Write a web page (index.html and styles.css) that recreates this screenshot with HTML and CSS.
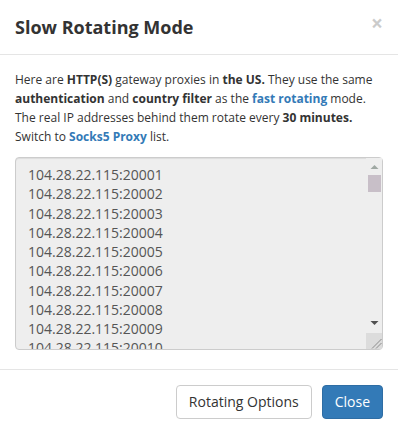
FILE: index.html
```html
<!DOCTYPE html>
<html>
<head>
<meta charset="utf-8">
<link rel="stylesheet" href="styles.css">
</head>
<body>
<div class="modal">
  <div class="modal-header">
    <h4 class="modal-title">Slow Rotating Mode</h4>
    <button class="close" type="button">×</button>
  </div>
  <div class="modal-body">
    <p class="intro">Here are <b>HTTP(S)</b> gateway proxies in <b>the US.</b> They use the same <b>authentication</b> and <b>country filter</b> as the <a class="link" href="#">fast rotating</a> mode. The real IP addresses behind them rotate every <b>30 minutes.</b> Switch to <a class="link" href="#">Socks5 Proxy</a> list.</p>
    <div class="list-wrap">
      <textarea class="proxy-list" readonly id="list"></textarea>
      <div class="fake-scroll" aria-hidden="true">
        <div class="sb-btn">
          <svg width="16" height="16" viewBox="0 0 16 16"><polygon points="4.5,11 8.5,7 12.5,11" fill="#9fa8a3"/></svg>
        </div>
        <div class="sb-track"><div class="sb-thumb"></div></div>
        <div class="sb-btn">
          <svg width="16" height="16" viewBox="0 0 16 16"><polygon points="4.5,6 12.5,6 8.5,10" fill="#505050"/></svg>
        </div>
        <div class="sb-corner">
          <svg width="16" height="16" viewBox="0 0 16 16"><line x1="6" y1="15.5" x2="15.5" y2="6" stroke="#777" stroke-width="0.8"/><line x1="10" y1="15.5" x2="15.5" y2="10" stroke="#777" stroke-width="0.8"/></svg>
        </div>
      </div>
    </div>
  </div>
  <div class="modal-footer">
    <button class="btn btn-default" type="button">Rotating Options</button>
    <button class="btn btn-primary" type="button">Close</button>
  </div>
</div>
<script src="script.js"></script>
</body>
</html>
```
FILE: script.js
```js
var lines = [];
for (var i = 1; i <= 100; i++) {
  lines.push('104.28.22.115:' + (20000 + i));
}
document.getElementById('list').value = lines.join('\n');
```
FILE: styles.css
```css
* { box-sizing: border-box; }
html, body {
  margin: 0;
  padding: 0;
  background: #fff;
}
body {
  font-family: "Open Sans", "Liberation Sans", sans-serif;
  color: #333;
  font-size: 12px;
  line-height: 19px;
}
.modal {
  width: 398px;
  height: 434px;
  background: #fff;
  display: flex;
  flex-direction: column;
}
.modal-header {
  position: relative;
  padding: 15px;
  border-bottom: 1px solid #e5e5e5;
}
.modal-title {
  margin: 0;
  font-size: 18px;
  line-height: 24px;
  font-weight: 700;
  color: #333;
}
.close {
  position: absolute;
  top: 13px;
  right: 15px;
  padding: 0;
  border: 0;
  background: transparent;
  font-family: "Open Sans", "Liberation Sans", sans-serif;
  font-size: 21px;
  font-weight: 700;
  line-height: 1;
  color: #000;
  opacity: 0.2;
}
.modal-body {
  padding: 15px 15px 0;
  height: 316px;
}
.intro {
  margin: 0 0 11px;
}
.intro b { font-weight: 700; }
.link {
  color: #337ab7;
  font-weight: 700;
  text-decoration: none;
}
.list-wrap {
  position: relative;
  width: 368px;
  height: 193px;
}
.proxy-list {
  display: block;
  width: 368px;
  height: 193px;
  padding: 7px 28px 6px 12px;
  margin: 0;
  border: 1px solid #ccc;
  border-radius: 4px;
  background: #eee;
  color: #555;
  font-family: "Open Sans", "Liberation Sans", sans-serif;
  font-size: 14px;
  line-height: 19.25px;
  box-shadow: inset 0 1px 1px rgba(0,0,0,.075);
  resize: none;
  outline: none;
  overflow: hidden;
}
.fake-scroll {
  position: absolute;
  top: 1px;
  right: 1px;
  bottom: 1px;
  width: 16px;
  display: flex;
  flex-direction: column;
  background: #eee;
}
.sb-btn {
  height: 16px;
  flex: none;
}
.sb-btn svg, .sb-corner svg { display: block; }
.sb-track {
  flex: 1;
  padding: 1px 1px 0 2px;
}
.sb-thumb {
  height: 17px;
  background: #c8bfc8;
}
.sb-corner {
  height: 16px;
  flex: none;
  margin-top: 2px;
  background: #dcdcdc;
}
.modal-footer {
  padding: 15px;
  border-top: 1px solid #e5e5e5;
  display: flex;
  justify-content: flex-end;
  gap: 10px;
}
.btn {
  font-family: "Open Sans", "Liberation Sans", sans-serif;
  font-size: 14px;
  line-height: 20px;
  padding: 6px 12px;
  border-radius: 4px;
  border: 1px solid #ccc;
  cursor: pointer;
}
.btn-default {
  background: #fff;
  color: #333;
}
.btn-primary {
  background: #337ab7;
  border-color: #2e6da4;
  color: #fff;
}
```
